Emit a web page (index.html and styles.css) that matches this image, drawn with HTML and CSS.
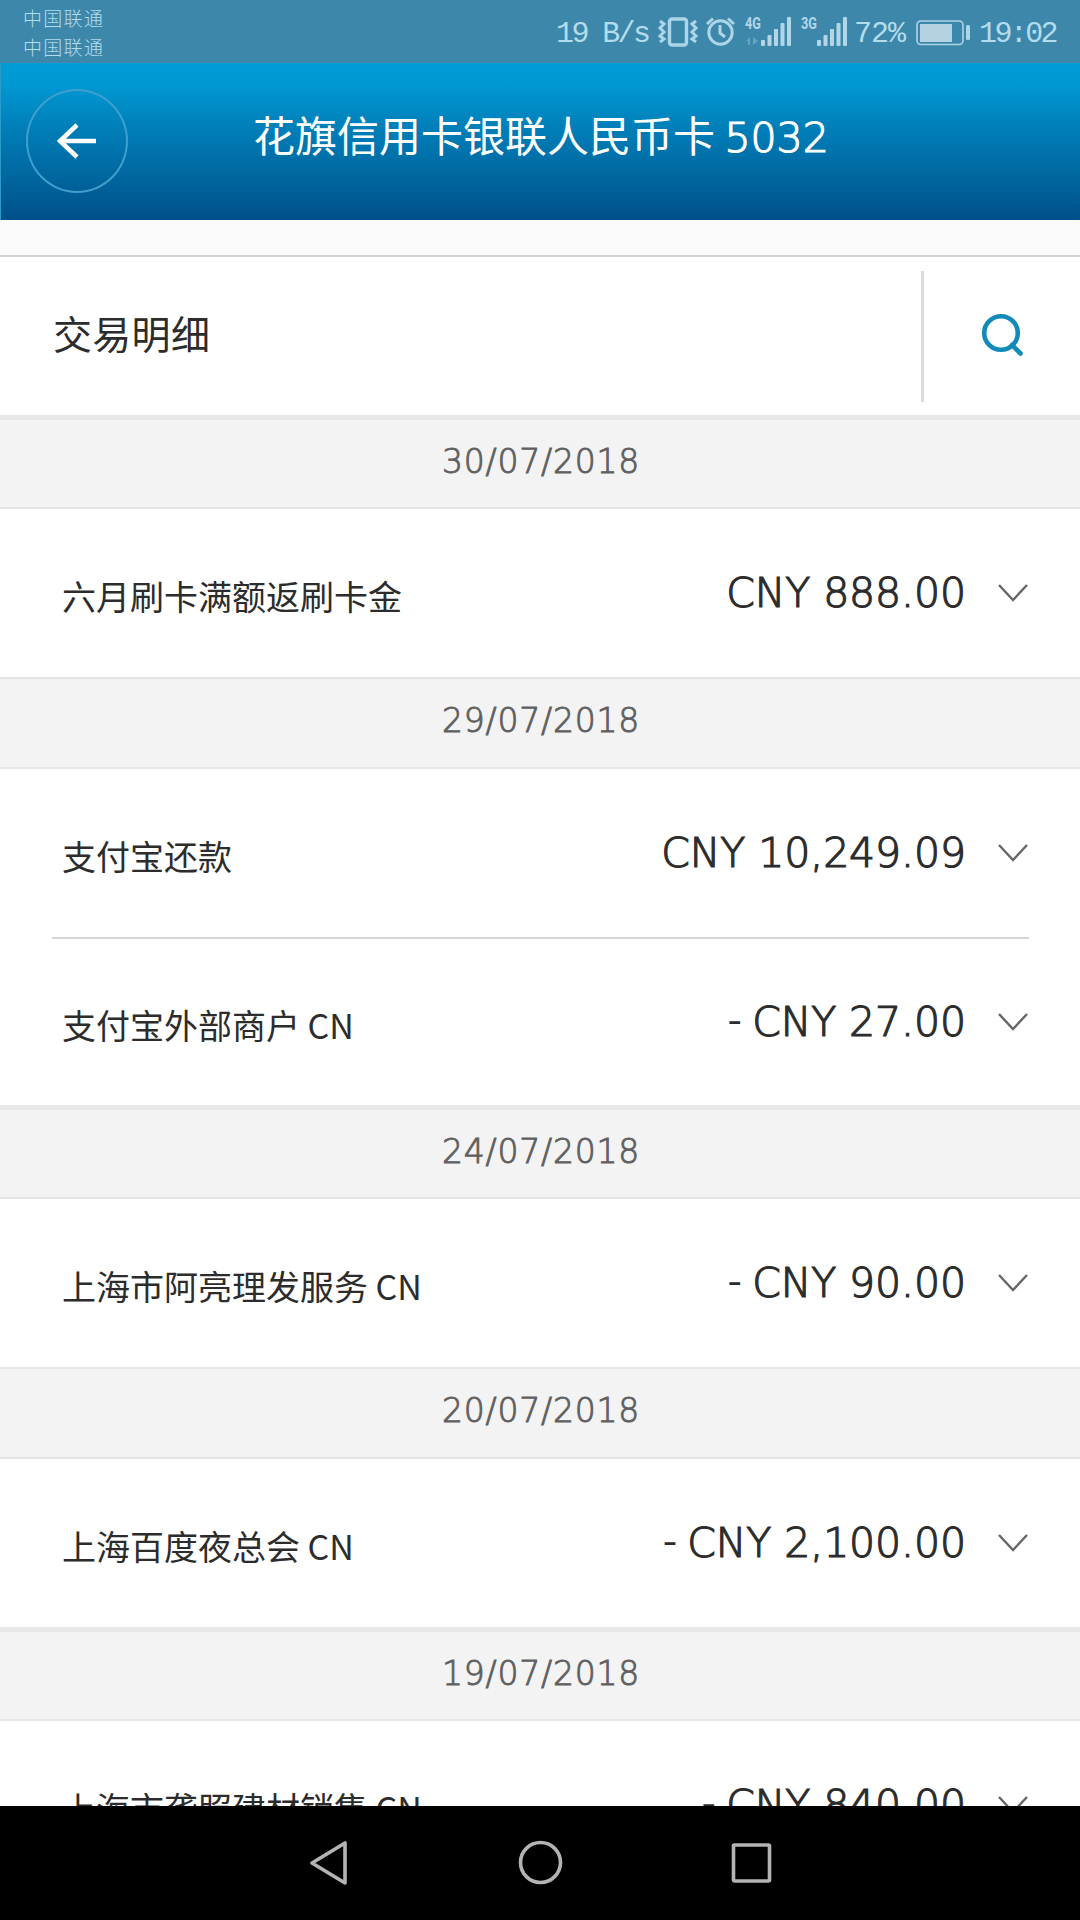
FILE: index.html
```html
<!DOCTYPE html>
<html lang="zh-CN">
<head>
  <meta charset="UTF-8">
  <title>交易明细</title>
  <link rel="stylesheet" href="styles.css">
</head>
<body>

<div class="status-bar">
  <div class="carrier">
    <span>中国联通</span>
    <span>中国联通</span>
  </div>
  <div class="status-right">
    <span class="speed">19 B/s</span>
    <svg width="44" height="64" viewBox="0 0 44 64" fill="none" stroke="#add5e8">
      <rect x="13.500" y="19" width="17" height="26" rx="2.500" stroke-width="3.400"/>
      <path d="M4 21l4 3-4 4 4 4-4 4 4 3-4 3M40 21l-4 3 4 4-4 4 4 4-4 3 4 3" stroke-width="3"/>
    </svg>
    <svg width="42" height="64" viewBox="0 0 42 64" fill="none" stroke="#add5e8" stroke-width="3">
      <circle cx="20.500" cy="32.500" r="11.700"/>
      <path d="M20 25v8l5 4M7 24l6-5.500M34 24l-6-5.500"/>
    </svg>
    <svg width="55" height="64" viewBox="0 0 55 64" fill="#b3d6e6">
      <text x="3" y="29" class="net" textLength="16" lengthAdjust="spacingAndGlyphs">4G</text>
      <path d="M4 41l4-4v8h-2v-4zM11 37l5 4-5 4z" opacity=".35"/>
      <rect x="19" y="40" width="4" height="6" rx="1"/>
      <rect x="25.500" y="35" width="4" height="11" rx="1"/>
      <rect x="32" y="29" width="4" height="17" rx="1"/>
      <rect x="38.500" y="23" width="4" height="23" rx="1"/>
      <rect x="45" y="17" width="4" height="29" rx="1"/>
    </svg>
    <svg width="55" height="64" viewBox="0 0 55 64" fill="#b3d6e6">
      <text x="4" y="29" class="net" textLength="16" lengthAdjust="spacingAndGlyphs">3G</text>
      <rect x="20" y="40" width="4" height="6" rx="1"/>
      <rect x="26.500" y="35" width="4" height="11" rx="1"/>
      <rect x="33" y="29" width="4" height="17" rx="1"/>
      <rect x="39.500" y="23" width="4" height="23" rx="1"/>
      <rect x="46" y="17" width="4" height="29" rx="1"/>
    </svg>
    <span class="percent">72%</span>
    <svg width="63" height="64" viewBox="0 0 63 64">
      <rect x="5" y="21" width="46" height="23.500" rx="4" fill="none" stroke="#add5e8" stroke-width="1.600"/>
      <rect x="8" y="24" width="32" height="18" fill="#b3d3e2"/>
      <rect x="54" y="25" width="4" height="15" rx="1.500" fill="#add5e8"/>
    </svg>
    <span class="clock">19:02</span>
  </div>
</div>

<header class="header">
  <a href="#" class="back-btn">
    <svg width="40" height="36" viewBox="0 0 40 36" fill="none" stroke="#fff" stroke-width="4.500">
      <path d="M39 18H3M20 2L3 18l17 16"/>
    </svg>
  </a>
  <h1>花旗信用卡银联人民币卡 <span class="card-no">5032</span></h1>
</header>

<div class="section-title">
  <h2>交易明细</h2>
  <a href="#" class="search-btn">
    <svg width="44" height="46" viewBox="0 0 44 46" fill="none" stroke="#128bbb" stroke-width="4.600">
      <circle cx="21" cy="20" r="16.800"/>
      <path d="M32 32l8.500 8.500" stroke-linecap="round"/>
    </svg>
  </a>
</div>

<main class="list">
  <div class="date thick">30/07/2018</div>
  <div class="row">
    <span class="name">六月刷卡满额返刷卡金</span>
    <span class="amount">CNY 888.00</span>
    <svg class="arrow" viewBox="0 0 30 18"><path d="M1 1l14 15L29 1"/></svg>
  </div>

  <div class="date">29/07/2018</div>
  <div class="row">
    <span class="name">支付宝还款</span>
    <span class="amount">CNY 10,249.09</span>
    <svg class="arrow" viewBox="0 0 30 18"><path d="M1 1l14 15L29 1"/></svg>
  </div>
  <div class="divider"></div>
  <div class="row short">
    <span class="name">支付宝外部商户 CN</span>
    <span class="amount"><span class="minus">-</span> CNY 27.00</span>
    <svg class="arrow" viewBox="0 0 30 18"><path d="M1 1l14 15L29 1"/></svg>
  </div>

  <div class="date thick">24/07/2018</div>
  <div class="row">
    <span class="name">上海市阿亮理发服务 CN</span>
    <span class="amount"><span class="minus">-</span> CNY 90.00</span>
    <svg class="arrow" viewBox="0 0 30 18"><path d="M1 1l14 15L29 1"/></svg>
  </div>

  <div class="date">20/07/2018</div>
  <div class="row">
    <span class="name">上海百度夜总会 CN</span>
    <span class="amount"><span class="minus">-</span> CNY 2,100.00</span>
    <svg class="arrow" viewBox="0 0 30 18"><path d="M1 1l14 15L29 1"/></svg>
  </div>

  <div class="date thick">19/07/2018</div>
  <div class="row">
    <span class="name">上海市龚照建材销售 CN</span>
    <span class="amount"><span class="minus">-</span> CNY 840.00</span>
    <svg class="arrow" viewBox="0 0 30 18"><path d="M1 1l14 15L29 1"/></svg>
  </div>
</main>

<nav class="nav-bar">
  <svg width="44" height="48" viewBox="0 0 44 48"><path d="M39 4v40L6 24z"/></svg>
  <svg width="48" height="48" viewBox="0 0 48 48"><circle cx="24.500" cy="23.500" r="20"/></svg>
  <svg width="44" height="48" viewBox="0 0 44 48"><rect x="3.500" y="6" width="36" height="36" rx="1"/></svg>
</nav>

</body>
</html>
```

FILE: styles.css
```css
* {
  box-sizing: border-box;
}

body {
  margin: 0;
  width: 1080px;
  height: 1920px;
  display: flex;
  flex-direction: column;
  overflow: hidden;
  font-family: "Noto Sans CJK SC", sans-serif;
  font-weight: 400;
  background-color: #fff;
  color: #2c2c2c;
}

h1, h2 {
  margin: 0;
  font-weight: inherit;
}

/* Status bar */
.status-bar {
  height: 63px;
  flex: none;
  display: flex;
  justify-content: space-between;
  background-color: #3d87aa;
  color: #b3dcec;
}

.carrier {
  display: flex;
  flex-direction: column;
  padding: 3px 0 0 23px;
  font-size: 19px;
  font-weight: 300;
  line-height: 29px;
  letter-spacing: 1.3px;
}

.status-right {
  display: flex;
  font-family: "Liberation Mono", monospace;
  font-size: 30px;
  line-height: 68px;
  white-space: pre;
}

.status-right svg {
  flex: none;
}

.speed {
  width: 98px;
  padding-right: 2px;
  margin-left: -2px;
  margin-right: 2px;
  letter-spacing: -2.6px;
}

.percent {
  width: 60px;
  padding-left: 2px;
  letter-spacing: -1px;
}

.clock {
  width: 105px;
  padding-left: 4px;
  letter-spacing: -2.6px;
}

.net {
  font: bold 16px Roboto, sans-serif;
}

/* Header */
.header {
  height: 157px;
  flex: none;
  display: flex;
  align-items: center;
  background: linear-gradient(#009cd8 0%, #0098d3 14%, #0080b9 40%, #006aa3 68%, #00508a 100%);
  border-left: 1px solid #2b9bc9;
  color: #fff;
}

.back-btn {
  width: 102px;
  height: 104px;
  margin: 0 125px 2px 25px;
  display: flex;
  align-items: center;
  justify-content: center;
  border: 2px solid #409fcd;
  border-radius: 50%;
}

.header h1 {
  font-size: 42px;
  line-height: 60px;
  padding-bottom: 11px;
  white-space: nowrap;
}

.card-no {
  font-family: "DejaVu Sans Light", "DejaVu Sans", sans-serif;
  font-weight: 200;
  font-size: 41px;
  -webkit-text-stroke: 1.2px;
}

/* Title row with search */
.section-title {
  height: 195px;
  flex: none;
  display: flex;
  align-items: center;
  justify-content: space-between;
  border-top: 35px solid #fafafa;
  box-shadow: inset 0 2px #d3d3d3;
}

.section-title h2 {
  padding: 0 0 6px 53px;
  font-size: 39px;
  letter-spacing: 0.3px;
}

.search-btn {
  width: 159px;
  height: 131px;
  margin-top: 2px;
  display: flex;
  align-items: center;
  justify-content: center;
  border-left: 3px solid #dcdcdc;
}

/* Transactions */
.list {
  flex: 1;
  min-height: 0;
  overflow: hidden;
}

.date {
  height: 92px;
  border-top: 2px solid #e5e5e5;
  border-bottom: 2px solid #e5e5e5;
  background-color: #f3f3f3;
  color: #606060;
  font-family: "DejaVu Sans Light", "DejaVu Sans", sans-serif;
  font-weight: 200;
  font-size: 33px;
  line-height: 84px;
  letter-spacing: 0.8px;
  text-align: center;
  padding-left: 2px;
  -webkit-text-stroke: 0.9px;
}

.date.thick {
  height: 94px;
  border-top: 5px solid #e8e8e8;
}

.row {
  height: 168px;
  display: flex;
  align-items: center;
  padding: 0 52px 0 62px;
}

.row.short {
  height: 166px;
}

.divider {
  height: 2px;
  margin: 0 51px 0 52px;
  background-color: #d6d6d6;
}

.name {
  flex: 1;
  padding-top: 4px;
  font-size: 34px;
}

.amount {
  font-family: "DejaVu Sans Light", "DejaVu Sans", sans-serif;
  font-weight: 200;
  font-size: 41px;
  letter-spacing: -0.1px;
  -webkit-text-stroke: 1.2px;
}

.minus {
  margin-right: -2px;
  font-size: 36px;
  vertical-align: 4px;
}

.arrow {
  width: 30px;
  height: 18px;
  margin-left: 32px;
  fill: none;
  stroke: #666;
  stroke-width: 2.4;
}

/* Android navigation */
.nav-bar {
  height: 114px;
  flex: none;
  display: flex;
  align-items: center;
  justify-content: center;
  gap: 166px;
  background-color: #000;
}

.nav-bar svg {
  fill: none;
  stroke: #b4b4b4;
  stroke-width: 3.6;
  stroke-linejoin: round;
}
```
